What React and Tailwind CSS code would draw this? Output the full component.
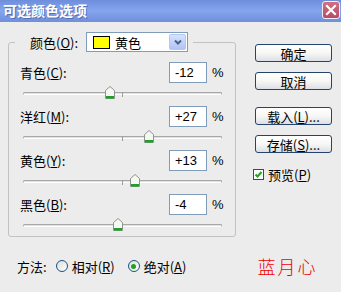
import React from 'react';

const rows = [
  { label: '青色', key: 'C', value: -12 },
  { label: '洋红', key: 'M', value: 27 },
  { label: '黄色', key: 'Y', value: 13 },
  { label: '黑色', key: 'B', value: -4 },
];

function Thumb({ value }) {
  // track starts at x=23, zero sits at x=122, one pixel per percent
  const left = Math.round(99 + value - 5);
  return (
    <svg
      className="absolute top-[3px]"
      style={{ left }}
      width="10"
      height="13"
      viewBox="0 0 10 13"
    >
      <path d="M0.5 4.5 L5 0.5 L9.5 4.5 V12.5 H0.5 Z" fill="#f6f6f2" stroke="#8c968c" />
      <rect x="1" y="10" width="8" height="2.5" fill="#1e9e2a" />
    </svg>
  );
}

function Slider({ value, last }) {
  return (
    <div className={`relative ml-[3px] mr-[1px] pt-[9px] ${last ? 'h-[21px]' : 'h-[23px]'}`}>
      <div className="h-[3px] rounded-full border border-[#a8a8a8] border-b-white bg-[#e0e0e0]" />
      <div className="absolute left-[99px] top-[9px] h-[5px] w-px bg-[#9c9c9c]" />
      <Thumb value={value} />
    </div>
  );
}

function Row({ label, hotkey, value, last }) {
  const text = value > 0 ? `+${value}` : `${value}`;
  return (
    <div>
      <div className="flex h-[21px] items-center">
        <span className="flex-1 text-[13px] text-black">
          {label}(<span className="underline">{hotkey}</span>):
        </span>
        <div className="flex h-[21px] w-[38px] items-center border border-[#7f9db9] bg-white pl-[5px] font-['Liberation_Sans',sans-serif] text-[13px] text-black">
          {text}
        </div>
        <span className="ml-[5px] w-[11px] font-['Liberation_Sans',sans-serif] text-[13px] text-black">%</span>
      </div>
      <Slider value={value} last={last} />
    </div>
  );
}

function XpButton({ children, className = '' }) {
  return (
    <div
      className={`flex h-[18px] w-[77px] items-center justify-center rounded-[3px] border border-[#24446e] bg-gradient-to-b from-white via-[#f7f7f4] to-[#dcdfe6] text-[13px] text-black ${className}`}
    >
      {children}
    </div>
  );
}

function Radio({ checked }) {
  return (
    <span className="flex h-[12px] w-[12px] items-center justify-center rounded-full border border-[#1c5180] bg-gradient-to-br from-[#dcdcd7] to-white">
      {checked && <span className="h-[5px] w-[5px] rounded-full bg-[#21a121]" />}
    </span>
  );
}

export default function App() {
  return (
    <div className="h-[292px] w-[341px] overflow-hidden bg-[#ececec] font-['Noto_Sans_CJK_SC','Liberation_Sans',sans-serif] leading-none">
      {/* title bar */}
      <div className="flex h-[22px] items-start justify-between bg-gradient-to-b from-[#6e8edc] via-[#86a5ee] to-[#6f8edb]">
        <span className="pl-[3px] pt-[3px] text-[14px] font-bold text-white [text-shadow:1px_1px_0_#5470b8]">
          可选颜色选项
        </span>
        <div className="mr-px mt-px flex h-[18px] w-[18px] items-center justify-center rounded-[3px] border border-[#eef0f8] bg-gradient-to-b from-[#d0707f] to-[#b84a66]">
          <svg width="12" height="12" viewBox="0 0 12 12">
            <path d="M2 2 L10 10 M10 2 L2 10" stroke="white" strokeWidth="2.2" strokeLinecap="square" />
          </svg>
        </div>
      </div>

      <div className="flex">
        <fieldset className="ml-[8px] mt-[10px] w-[228px] rounded-[3px] border border-[#c2c2c2]">
          <legend className="ml-[6px]">
            <div className="flex h-[20px] items-center pl-[15px] pr-[5px]">
              <span className="text-[13px] text-black">
                颜色(<span className="underline">O</span>):
              </span>
              <div className="ml-[8px] flex h-[20px] w-[102px] items-center border border-[#7f9db9] bg-white pl-[6px] pr-px">
                <span className="h-[13px] w-[17px] border border-black bg-[#ffff00]" />
                <span className="ml-[5px] flex-1 text-[13px] text-black">黄色</span>
                <span className="flex h-[16px] w-[17px] items-center justify-center rounded-[2px] border border-[#b4c7f4] bg-gradient-to-b from-[#d6e2fd] to-[#b0c4f4]">
                  <svg width="8" height="6" viewBox="0 0 8 6">
                    <path d="M1 1.5 L4 4.5 L7 1.5" fill="none" stroke="#4d6185" strokeWidth="2" />
                  </svg>
                </span>
              </div>
            </div>
          </legend>
          <div className="mt-[10px] pl-[11px] pr-[12px]">
            {rows.map((r, i) => (
              <Row key={r.key} label={r.label} hotkey={r.key} value={r.value} last={i === rows.length - 1} />
            ))}
          </div>
        </fieldset>

        <div className="ml-[19px] flex w-[78px] flex-col pt-[22px]">
          <XpButton>确定</XpButton>
          <XpButton className="mt-[10px]">取消</XpButton>
          <XpButton className="mt-[17px]">
            载入(<span className="underline">L</span>)...
          </XpButton>
          <XpButton className="mt-[10px]">
            存储(<span className="underline">S</span>)...
          </XpButton>
          <div className="-ml-[2px] mt-[14px] flex h-[14px] items-center">
            <span className="flex h-[11px] w-[11px] items-center justify-center border border-[#1c5180] bg-white">
              <svg width="9" height="9" viewBox="0 0 9 9">
                <path d="M1.5 4.5 L3.5 6.5 L7.5 2" fill="none" stroke="#21a121" strokeWidth="2" />
              </svg>
            </span>
            <span className="ml-[4px] text-[13px] text-black">
              预览(<span className="underline">P</span>)
            </span>
          </div>
        </div>
      </div>

      <div className="mt-[22px] flex h-[14px] items-center pl-[17px] text-[13px] text-black">
        <span>方法:</span>
        <span className="ml-[9px]"><Radio /></span>
        <span className="ml-[4px]">
          相对(<span className="underline">R</span>)
        </span>
        <span className="ml-[13px]"><Radio checked /></span>
        <span className="ml-[4px]">
          绝对(<span className="underline">A</span>)
        </span>
        <span className="ml-[71px] text-[18px] font-light tracking-[2px] text-[#ee0000]">蓝月心</span>
      </div>
    </div>
  );
}
